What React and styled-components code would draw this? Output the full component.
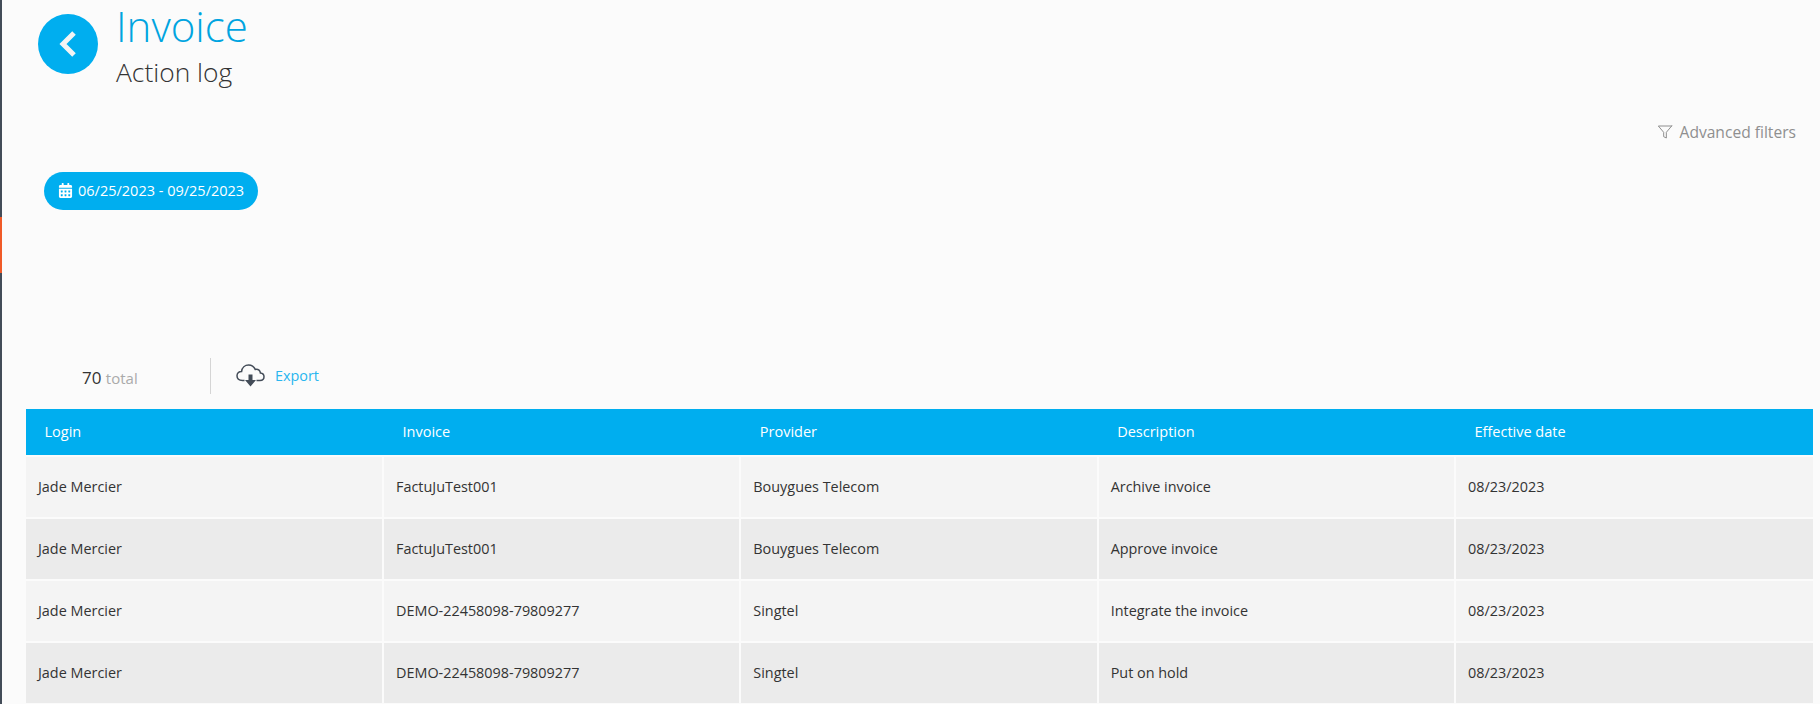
import React from "react";
import styled, { createGlobalStyle } from "styled-components";
import { FaCalendarAlt } from "react-icons/fa";
import { FiFilter } from "react-icons/fi";

const GlobalStyle = createGlobalStyle`
  * {
    box-sizing: border-box;
  }
  html, body {
    margin: 0;
    height: 100%;
    overflow: hidden;
    background: #fbfbfb;
    font-family: "Open Sans", "Liberation Sans", sans-serif;
  }
`;

const Shell = styled.div`
  display: flex;
  height: 704px;
`;

const SideEdge = styled.div`
  width: 2px;
  flex: none;
  background: #434c58;
  display: flex;
  flex-direction: column;
  padding-top: 217px;
`;

const SideMarker = styled.div`
  height: 56px;
  background: #f05a28;
`;

const Main = styled.div`
  flex: 1;
  min-width: 0;
  display: flex;
  flex-direction: column;
`;

const Header = styled.div`
  display: flex;
  height: 100px;
  padding-left: 36px;
`;

const BackButton = styled.div`
  width: 60px;
  height: 60px;
  margin-top: 14px;
  border-radius: 50%;
  background: #00aeef;
  display: flex;
  align-items: center;
  justify-content: center;
  flex: none;
`;

const Titles = styled.div`
  margin-left: 18px;
`;

const Title = styled.div`
  font-size: 42px;
  font-weight: 300;
  line-height: 52px;
  color: #00a4e0;
`;

const SubTitle = styled.div`
  font-size: 26.4px;
  font-weight: 300;
  line-height: 36px;
  margin-top: 2px;
  color: #333;
`;

const FilterRow = styled.div`
  display: flex;
  justify-content: flex-end;
  align-items: center;
  gap: 7px;
  height: 64px;
  padding: 0 24px 1px 0;
  font-size: 15.6px;
  color: #8f8f8f;
`;

const DateRow = styled.div`
  display: flex;
  align-items: flex-start;
  height: 184px;
  padding: 8px 0 0 42px;
`;

const DatePill = styled.div`
  display: flex;
  align-items: center;
  gap: 5px;
  height: 38px;
  padding: 0 14px 1px;
  border-radius: 19px;
  background: #00aeef;
  color: #fff;
  font-size: 14.5px;
  font-weight: 500;
`;

const Toolbar = styled.div`
  display: flex;
  align-items: center;
  height: 56px;
  margin-bottom: 5px;
`;

const Total = styled.div`
  width: 208px;
  padding: 3px 0 0 80px;
  font-size: 17px;
  color: #333;
  & span {
    font-size: 15px;
    color: #aaa;
  }
`;

const Divider = styled.div`
  width: 1px;
  height: 36px;
  background: #d5d5d5;
`;

const ExportLink = styled.div`
  display: flex;
  align-items: center;
  gap: 10px;
  margin-left: 25px;
  padding-bottom: 1px;
  font-size: 14.4px;
  color: #29b6ef;
`;

const Table = styled.div`
  margin: 0 7px 0 24px;
`;

const HeadRow = styled.div`
  display: grid;
  grid-template-columns: 358px repeat(3, 357.33px) 1fr;
  height: 46px;
  margin-bottom: 2px;
  background: #00aeef;
`;

const HeadCell = styled.div`
  display: flex;
  align-items: center;
  padding: 0 0 2px 18.5px;
  font-size: 14.5px;
  font-weight: 500;
  color: #fff;
`;

const Row = styled.div`
  display: grid;
  grid-template-columns: 358px repeat(3, 357.33px) 1fr;
  height: 60px;
  margin-bottom: 2px;
  &:last-child {
    margin-bottom: 0;
  }
`;

const Cell = styled.div`
  display: flex;
  align-items: center;
  padding: 0 0 2px 12px;
  font-size: 14.4px;
  color: #333;
  background: ${(p) => (p.$odd ? "#f4f4f4" : "#ebebeb")};
  border-right: ${(p) => (p.$last ? "none" : "2px solid #fbfbfb")};
`;

const columns = ["Login", "Invoice", "Provider", "Description", "Effective date"];

const rows = [
  ["Jade Mercier", "FactuJuTest001", "Bouygues Telecom", "Archive invoice", "08/23/2023"],
  ["Jade Mercier", "FactuJuTest001", "Bouygues Telecom", "Approve invoice", "08/23/2023"],
  ["Jade Mercier", "DEMO-22458098-79809277", "Singtel", "Integrate the invoice", "08/23/2023"],
  ["Jade Mercier", "DEMO-22458098-79809277", "Singtel", "Put on hold", "08/23/2023"],
];

function CloudIcon() {
  return (
    <svg width="29" height="23" viewBox="0 0 29 23">
      <path
        d="M8.5 16.5 H6.5 C3 16.5 1 14.5 1 11.8 C1 9.2 3 7.4 5.6 7.4 C6 3.6 9 1 12.6 1 C15.6 1 18 2.7 19.2 5.4 C22.6 4.8 24.2 6.8 24.4 9 C26.6 9.2 28 10.8 28 12.8 C28 15 26.4 16.5 24 16.5 H20.5"
        fill="none"
        stroke="#434c58"
        strokeWidth="1.5"
      />
      <path d="M12.5 10.5 H16.5 V16 H20 L14.5 22.5 L9 16 H12.5 Z" fill="#434c58" />
    </svg>
  );
}

export default function App() {
  return (
    <Shell>
      <GlobalStyle />
      <SideEdge>
        <SideMarker />
      </SideEdge>
      <Main>
        <Header>
          <BackButton>
            <svg width="22" height="30" viewBox="0 0 22 30">
              <path d="M17 4 L6 15 L17 26" fill="none" stroke="#f4f4f4" strokeWidth="5" />
            </svg>
          </BackButton>
          <Titles>
            <Title>Invoice</Title>
            <SubTitle>Action log</SubTitle>
          </Titles>
        </Header>
        <FilterRow>
          <FiFilter size={16} strokeWidth={1.5} />
          Advanced filters
        </FilterRow>
        <DateRow>
          <DatePill>
            <FaCalendarAlt size={15} />
            06/25/2023 - 09/25/2023
          </DatePill>
        </DateRow>
        <Toolbar>
          <Total>
            70 <span>total</span>
          </Total>
          <Divider />
          <ExportLink>
            <CloudIcon />
            Export
          </ExportLink>
        </Toolbar>
        <Table>
          <HeadRow>
            {columns.map((name) => (
              <HeadCell key={name}>{name}</HeadCell>
            ))}
          </HeadRow>
          {rows.map((row, idx) => (
            <Row key={idx}>
              {row.map((value, col) => (
                <Cell key={col} $odd={idx % 2 === 0} $last={col === row.length - 1}>
                  {value}
                </Cell>
              ))}
            </Row>
          ))}
        </Table>
      </Main>
    </Shell>
  );
}
